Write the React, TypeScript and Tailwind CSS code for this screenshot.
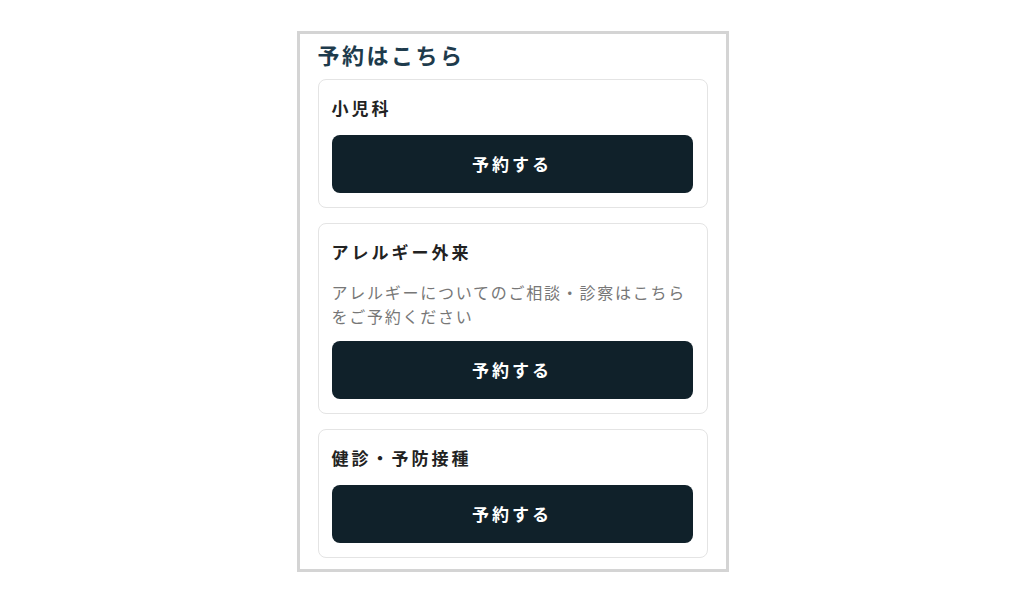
import React from "react";

const font = { fontFamily: '"Noto Sans CJK JP", "Noto Sans", sans-serif' };

function Card({ title, desc }: { title: string; desc?: string }) {
  return (
    <div className="rounded-[8px] border border-[#e4e4e4] bg-white pl-[13px] pr-[14px] pt-[14px] pb-[14px]">
      <div className="h-[28px] text-[17px] leading-[28px] font-bold tracking-[3px] text-[#222]">{title}</div>
      {desc && (
        <p className="mt-[14px] text-[16px] leading-[24px] tracking-[1.75px] text-[#777]">{desc}</p>
      )}
      <button className="mt-[13px] flex h-[58px] w-full items-center justify-center rounded-[8px] bg-[#10212a] text-[17px] font-bold tracking-[3px] text-white">
        予約する
      </button>
    </div>
  );
}

export default function App() {
  return (
    <div className="min-h-[601px] w-full bg-white pt-[31px]" style={font}>
      <div className="mx-auto w-[432px] border-[3px] border-[#d4d4d4] bg-white pl-[18px] pr-[18px] pb-[11px] pt-[4px]">
        <h1 className="h-[32px] text-[22px] leading-[32px] font-bold tracking-[2.5px] text-[#1e3b4c]">予約はこちら</h1>
        <div className="mt-[9px] flex flex-col gap-[15px]">
          <Card title="小児科" />
          <Card title="アレルギー外来" desc="アレルギーについてのご相談・診察はこちらをご予約ください" />
          <Card title="健診・予防接種" />
        </div>
      </div>
    </div>
  );
}
